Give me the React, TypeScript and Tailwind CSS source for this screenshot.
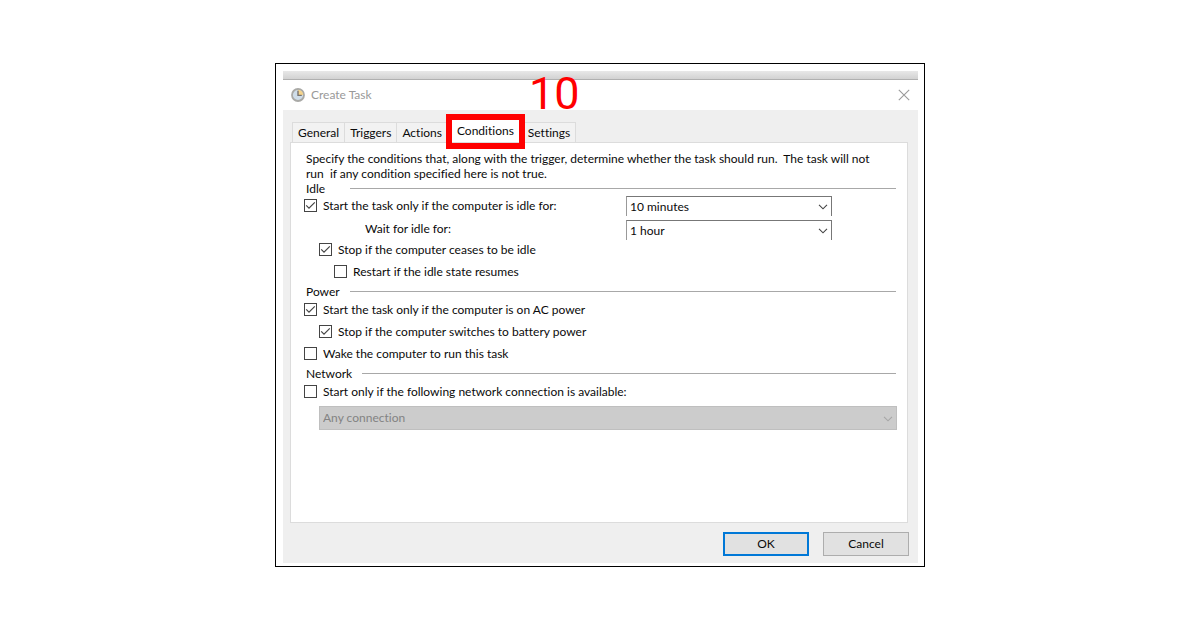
import React, { useState } from 'react';

type TabId = 'general' | 'triggers' | 'actions' | 'conditions' | 'settings';

const tabs: { id: TabId; label: string }[] = [
  { id: 'general', label: 'General' },
  { id: 'triggers', label: 'Triggers' },
  { id: 'actions', label: 'Actions' },
  { id: 'conditions', label: 'Conditions' },
  { id: 'settings', label: 'Settings' },
];

const ClockIcon = () => (
  <svg width="14" height="14" viewBox="0 0 14 14" fill="none">
    <circle cx="7" cy="7" r="6" fill="#cfdde9" stroke="#a9a9a6" strokeWidth="1.8" />
    <path d="M7 7V1.8A5.2 5.2 0 0 1 12.2 7Z" fill="#f5d48c" />
    <path d="M7 2.8V7.4H10.8" stroke="#77736f" strokeWidth="1.4" />
  </svg>
);

const CloseIcon = () => (
  <svg width="12" height="12" viewBox="0 0 12 12" fill="none">
    <path d="M0.8 0.8L11.2 11.2M11.2 0.8L0.8 11.2" stroke="#9a9a9a" strokeWidth="1.1" />
  </svg>
);

interface CheckRowProps {
  label: string;
  checked?: boolean;
  className?: string;
}

function CheckRow({ label, checked = false, className = '' }: CheckRowProps) {
  const [isChecked, setIsChecked] = useState(checked);

  return (
    <label className={`flex h-[18px] items-center gap-[6px] whitespace-nowrap ${className}`}>
      <span className="grid shrink-0">
        <input
          type="checkbox"
          checked={isChecked}
          onChange={(e) => setIsChecked(e.target.checked)}
          className="peer col-start-1 row-start-1 size-[13px] appearance-none border border-[#444444] bg-white"
        />
        <svg
          viewBox="0 0 13 13"
          fill="none"
          className="pointer-events-none invisible col-start-1 row-start-1 size-[13px] peer-checked:visible"
        >
          <path d="M2.2 6.4L5 9.2L10.8 3.4" stroke="#444444" strokeWidth="1.2" />
        </svg>
      </span>
      {label}
    </label>
  );
}

interface DropDownProps {
  id: string;
  options: string[];
  disabled?: boolean;
  className?: string;
  ariaLabel?: string;
}

function DropDown({ id, options, disabled, className = '', ariaLabel }: DropDownProps) {
  return (
    <div className="grid items-center">
      <select
        id={id}
        disabled={disabled}
        aria-label={ariaLabel}
        className={`col-start-1 row-start-1 w-full appearance-none opacity-100 ${className}`}
      >
        {options.map((option) => (
          <option key={option}>{option}</option>
        ))}
      </select>
      <svg
        viewBox="0 0 10 6"
        fill="none"
        className={`pointer-events-none col-start-1 row-start-1 mt-[2px] mr-1 h-[6px] w-[10px] justify-self-end ${
          disabled ? 'text-[#a6a6a6]' : 'text-[#444444]'
        }`}
      >
        <path d="M1 0.8L5 4.8L9 0.8" stroke="currentColor" strokeWidth="1.1" />
      </svg>
    </div>
  );
}

function SectionTitle({ title, gap }: { title: string; gap: string }) {
  return (
    <div className={`flex h-[15px] items-center pl-[2px] ${gap}`}>
      <h2>{title}</h2>
      <div className="h-px flex-1 bg-[#a8a8a8]" />
    </div>
  );
}

function ConditionsPanel() {
  return (
    <div className="border border-[#dcdcdc] bg-white pt-2 pr-[11px] pb-[92px] pl-[13px]">
      <p className="pr-3 pl-[2px] leading-[15px]">
        Specify the conditions that, along with the trigger, determine whether the task should run.&nbsp; The task will
        not run&nbsp; if any condition specified here is not true.
      </p>

      <SectionTitle title="Idle" gap="gap-[25px]" />
      <div className="grid grid-cols-[322px_minmax(0,206px)] gap-y-1">
        <CheckRow label="Start the task only if the computer is idle for:" checked />
        <DropDown
          id="idle-for"
          ariaLabel="Idle time"
          options={['10 minutes', '30 minutes', '1 hour']}
          className="h-5 border-t border-r border-l border-[#777777] border-l-[#999999] bg-white pl-[3px]"
        />
        <label htmlFor="wait-for" className="self-start pt-px pl-[61px]">
          Wait for idle for:
        </label>
        <DropDown
          id="wait-for"
          options={['1 hour', '2 hours']}
          className="h-5 border-t border-r border-l border-[#777777] border-l-[#999999] bg-white pl-[3px]"
        />
      </div>
      <div className="flex flex-col gap-1">
        <CheckRow label="Stop if the computer ceases to be idle" checked className="pl-[15px]" />
        <CheckRow label="Restart if the idle state resumes" className="pl-[30px]" />
        <SectionTitle title="Power" gap="gap-[10px]" />
      </div>
      <div className="flex flex-col gap-1 pt-px">
        <CheckRow label="Start the task only if the computer is on AC power" checked />
        <CheckRow label="Stop if the computer switches to battery power" checked className="pl-[15px]" />
        <CheckRow label="Wake the computer to run this task" />
        <SectionTitle title="Network" gap="gap-[10px]" />
      </div>
      <div className="flex flex-col gap-[6px] pt-px">
        <CheckRow label="Start only if the following network connection is available:" />
        <div className="-mr-px pl-[15px]">
          <DropDown
            id="network"
            ariaLabel="Network connection"
            options={['Any connection']}
            disabled
            className="h-6 border border-[#bfbfbf] bg-[#cccccc] pb-[2px] pl-[3px] text-[#838383]"
          />
        </div>
      </div>
    </div>
  );
}

export default function App() {
  const [activeTab, setActiveTab] = useState<TabId>('conditions');

  return (
    <main className="flex min-h-screen items-center justify-center bg-white font-[Lato,'Open_Sans',sans-serif] text-[12px] leading-[15px] text-[#0a0a0a] [font-variant-ligatures:none]">
      <div className="w-full max-w-[650px] border border-black pt-[7px] pr-[6px] pb-[3px] pl-[7px]">
        {/* Edge of the window behind the dialog */}
        <div className="h-[9px] border-b border-[#b0b0b0] bg-linear-to-b from-[#e8e8e8] to-[#d2d2d2]" />

        <header className="flex h-[30px] items-center gap-[6px] pr-2 pb-px pl-2 text-[#999999]">
          <ClockIcon />
          <h1 className="flex-1">Create Task</h1>
          <button type="button" aria-label="Close">
            <CloseIcon />
          </button>
        </header>

        <div className="bg-[#efefef] pt-[10px] pr-[10px] pb-[7px] pl-[7px]">
          <div role="tablist" className="flex items-end pl-[2px]">
            {tabs.map((tab) => {
              const isActive = activeTab === tab.id;

              return (
                <button
                  key={tab.id}
                  type="button"
                  role="tab"
                  aria-selected={isActive}
                  onClick={() => setActiveTab(tab.id)}
                  className={
                    isActive
                      ? 'relative h-[22px] bg-white px-[9px] pb-px'
                      : 'h-5 border-t border-r border-[#dcdcdc] bg-[#f2f2f2] px-[5px] first:border-l'
                  }
                >
                  {tab.label}
                  {isActive && (
                    <>
                      <span className="pointer-events-none absolute -inset-x-[2px] -top-[6px] -bottom-[7px] border-[6px] border-[#ff0000]" />
                      <span className="pointer-events-none absolute -top-[50px] left-[81px] font-[Roboto,Arial,sans-serif] text-[45px] leading-[48px] text-[#ff0000]">
                        10
                      </span>
                    </>
                  )}
                </button>
              );
            })}
          </div>

          <ConditionsPanel />

          <footer className="-mr-px flex justify-end gap-[14px] pt-[9px]">
            <button type="button" className="h-6 w-[86px] border-2 border-[#0078d7] bg-[#e1e1e1] pb-[2px]">
              OK
            </button>
            <button type="button" className="h-6 w-[86px] border border-[#adadad] bg-[#e1e1e1] pb-[2px]">
              Cancel
            </button>
          </footer>
        </div>
      </div>
    </main>
  );
}
